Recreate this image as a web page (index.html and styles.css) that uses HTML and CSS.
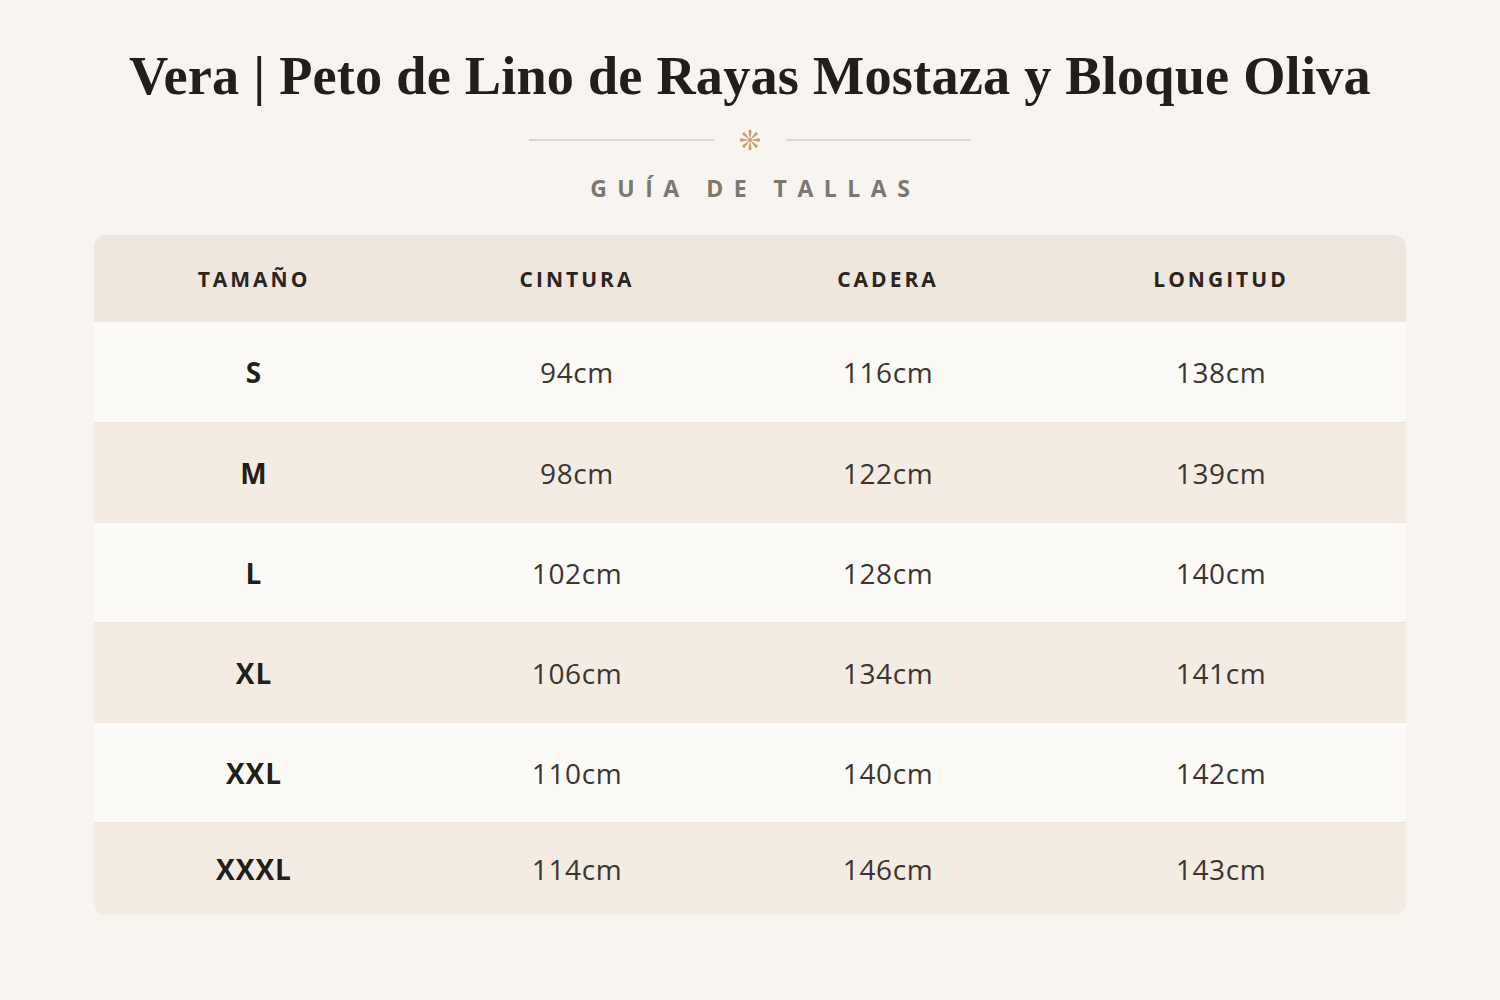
FILE: index.html
```html
<!DOCTYPE html>
<html lang="es">
<head>
<meta charset="utf-8">
<title>Guía de tallas</title>
<link rel="stylesheet" href="styles.css">
</head>
<body>
<main class="page">
  <h1 class="title">Vera | Peto de Lino de Rayas Mostaza y Bloque Oliva</h1>
  <div class="divider">
    <span class="line"></span>
    <svg class="star" width="24" height="24" viewBox="0 0 22 22" aria-hidden="true">
      <g fill="#c9a070">
        <path id="arm" d="M11 11 L9.5 2.8 A1.55 1.55 0 0 1 12.5 2.8 Z"/>
        <use href="#arm" transform="rotate(45 11 11)"/>
        <use href="#arm" transform="rotate(90 11 11)"/>
        <use href="#arm" transform="rotate(135 11 11)"/>
        <use href="#arm" transform="rotate(180 11 11)"/>
        <use href="#arm" transform="rotate(225 11 11)"/>
        <use href="#arm" transform="rotate(270 11 11)"/>
        <use href="#arm" transform="rotate(315 11 11)"/>
        <circle cx="11" cy="11" r="1.7"/>
      </g>
    </svg>
    <span class="line"></span>
  </div>
  <h2 class="subtitle">GUÍA DE TALLAS</h2>
  <table class="sizes">
    <colgroup>
      <col class="c1"><col class="c2"><col class="c3"><col class="c4">
    </colgroup>
    <thead>
      <tr><th>TAMAÑO</th><th>CINTURA</th><th>CADERA</th><th>LONGITUD</th></tr>
    </thead>
    <tbody>
      <tr><td class="size">S</td><td>94cm</td><td>116cm</td><td>138cm</td></tr>
      <tr><td class="size">M</td><td>98cm</td><td>122cm</td><td>139cm</td></tr>
      <tr><td class="size">L</td><td>102cm</td><td>128cm</td><td>140cm</td></tr>
      <tr><td class="size">XL</td><td>106cm</td><td>134cm</td><td>141cm</td></tr>
      <tr><td class="size">XXL</td><td>110cm</td><td>140cm</td><td>142cm</td></tr>
      <tr><td class="size">XXXL</td><td>114cm</td><td>146cm</td><td>143cm</td></tr>
    </tbody>
  </table>
</main>
</body>
</html>
```

FILE: styles.css
```css
html, body {
  margin: 0;
  padding: 0;
  background: #f8f5f0;
}
body {
  font-family: "Open Sans", "Liberation Sans", sans-serif;
  color: #2a2520;
}
.page {
  width: 1312px;
  margin: 0 auto;
  padding-top: 44px;
  display: flex;
  flex-direction: column;
  align-items: center;
}
.title {
  margin: 0;
  font-family: "Liberation Serif", "Times New Roman", serif;
  font-weight: 700;
  font-size: 54.3px;
  line-height: 64px;
  color: #221e1a;
  letter-spacing: 0.2px;
}
.divider {
  margin-top: 20px;
  display: flex;
  align-items: center;
  gap: 24px;
}
.divider .line {
  width: 185px;
  height: 2px;
  background: #e3d5c6;
}
.star {
  display: block;
}
.subtitle {
  margin: 21px 0 0 0;
  font-size: 23px;
  line-height: 30px;
  font-weight: 700;
  letter-spacing: 10.5px;
  padding-left: 10.5px;
  color: #7b7771;
}
.sizes {
  margin-top: 32px;
  width: 1312px;
  border-collapse: separate;
  border-spacing: 0;
  table-layout: fixed;
  border-radius: 12px;
  overflow: hidden;
}
.c1 { width: 320px; }
.c2 { width: 326px; }
.c3 { width: 296px; }
.c4 { width: 370px; }
.sizes th {
  background: #efe6dd;
  height: 87px;
  padding: 0;
  font-size: 21px;
  font-weight: 700;
  letter-spacing: 3px;
  color: #2a2520;
  text-align: center;
}
.sizes td {
  height: 99px;
  padding: 0;
  text-align: center;
  font-size: 28px;
  font-weight: 400;
  letter-spacing: 0.6px;
  color: #3a3530;
  border-top: 1px solid #ede4da;
}
.sizes tbody tr:nth-child(odd) td {
  background: #fcfaf7;
}
.sizes tbody tr:nth-child(even) td {
  background: #f4ebe2;
}
.sizes tbody tr:first-child td {
  border-top: none;
  height: 100px;
}
.sizes tbody tr:last-child td {
  height: 92px;
}
.sizes td.size {
  font-weight: 700;
  letter-spacing: 1px;
  color: #221e1a;
}
```
